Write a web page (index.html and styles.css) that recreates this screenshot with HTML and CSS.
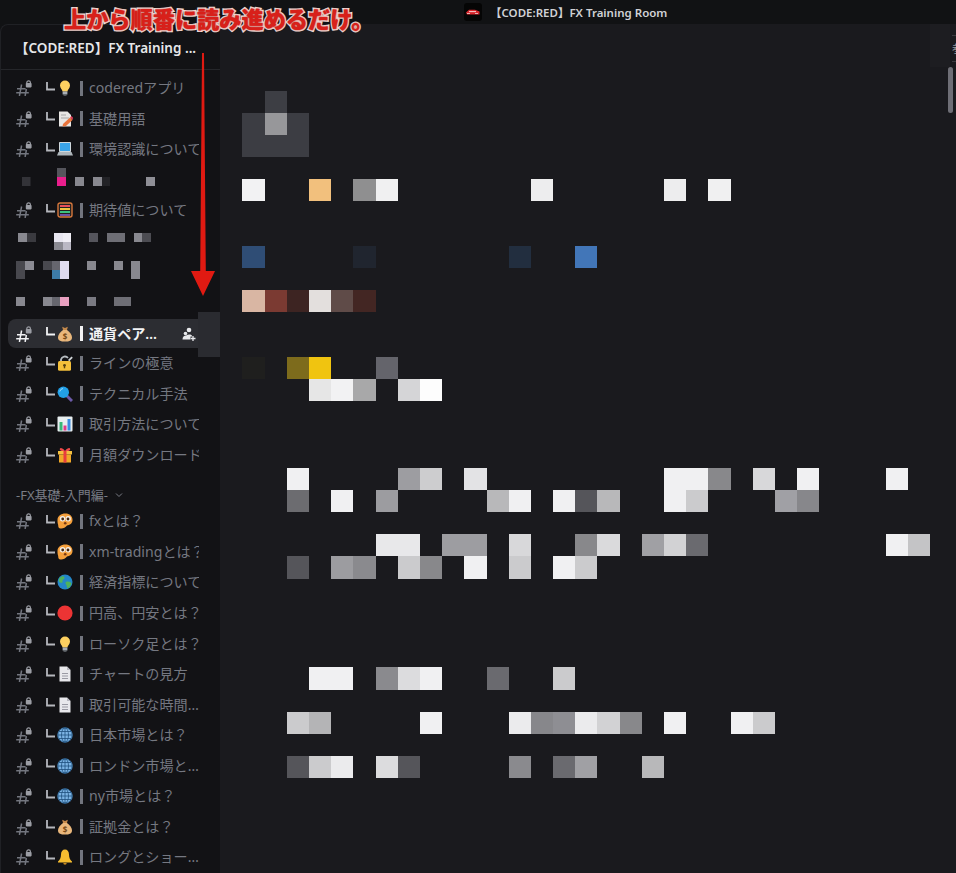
FILE: index.html
```html
<!DOCTYPE html>
<html lang="ja">
<head>
<meta charset="utf-8">
<title>【CODE:RED】FX Training Room</title>
<link rel="stylesheet" href="styles.css">
</head>
<body>
<svg class="defs" width="0" height="0" aria-hidden="true">
  <defs>
    <symbol id="hash" viewBox="0 0 16 16">
      <path d="M5.600 4.500 3.400 16M10.400 9 9.100 16M1 8.700H9.500M0.200 12.800H12.800" fill="none" stroke="currentColor" stroke-width="1.500"/>
      <rect x="10.800" y="0.800" width="3.600" height="4" rx="1.800" fill="none" stroke="#9b9da4" stroke-width="1.200"/>
      <rect x="9.800" y="3" width="5.800" height="4.400" rx="0.800" fill="#9b9da4"/>
    </symbol>
    <symbol id="elbow" viewBox="0 0 9 9">
      <path d="M1 0V7.500H9" fill="none" stroke="currentColor" stroke-width="1.800"/>
    </symbol>
    <symbol id="bulb" viewBox="0 0 16 16">
      <path d="M8 0.500A5 5 0 0 0 3 5.500C3 8 5.200 9.500 5.600 11.500H10.400C10.800 9.500 13 8 13 5.500A5 5 0 0 0 8 0.500Z" fill="#fdd060"/>
      <rect x="5.600" y="11.500" width="4.800" height="3" fill="#a8aeb5"/>
      <rect x="6.500" y="14.500" width="3" height="1.200" fill="#6d7278"/>
    </symbol>
    <symbol id="memo" viewBox="0 0 16 16">
      <path d="M2 0.500H10.500L14 4V15.500H2Z" fill="#e8e6e4"/>
      <path d="M4 4H9M4 7H12" stroke="#a8a8a8" stroke-width="1"/>
      <path d="M6 13 13 6.500 15.500 9 9 15 5.500 15.500Z" fill="#e8743c"/>
      <path d="M13 6.500 14.500 5 16 6.700 15.500 9Z" fill="#e0405a"/>
    </symbol>
    <symbol id="laptop" viewBox="0 0 16 16">
      <rect x="2" y="1" width="12" height="10" rx="0.800" fill="#cfd8dc"/>
      <rect x="3" y="2" width="10" height="8" fill="#3aa4e8"/>
      <path d="M1.500 11H14.500L16 14.500H0Z" fill="#aeb6bb"/>
    </symbol>
    <symbol id="abacus" viewBox="0 0 16 16">
      <rect x="1" y="1" width="14" height="14" rx="2" fill="#222" stroke="#d8783c" stroke-width="1.400"/>
      <path d="M3 4H13" stroke="#e8505a" stroke-width="2"/>
      <path d="M3 7H13" stroke="#f0c040" stroke-width="2"/>
      <path d="M3 10H13" stroke="#3cc080" stroke-width="2"/>
      <path d="M3 13H13" stroke="#8860d0" stroke-width="1.600"/>
    </symbol>
    <symbol id="bag" viewBox="0 0 16 16">
      <path d="M5.200 0.800 8 2 10.800 0.800 10 4H6Z" fill="#c58a4c"/>
      <path d="M6 4H10C13 6 15 9 15 11.500 15 14.500 12.500 15.600 8 15.600S1 14.500 1 11.500C1 9 3 6 6 4Z" fill="#e9b77c"/>
      <text class="bag-mark" x="8" y="13.500" text-anchor="middle">$</text>
    </symbol>
    <symbol id="lock" viewBox="0 0 16 16">
      <path d="M4 7V4.500A4 4 0 0 1 11 3" fill="none" stroke="#b7bcc1" stroke-width="1.800"/>
      <rect x="1" y="6" width="13" height="9.800" rx="1.500" fill="#f4bf3a"/>
      <circle cx="7.500" cy="10.300" r="1.400" fill="#5a4210"/>
      <rect x="6.800" y="10.300" width="1.400" height="3" fill="#5a4210"/>
      <path d="M11 5 14.500 1.500 15.800 2.800 12.300 6.300Z" fill="#d0d4d8"/>
    </symbol>
    <symbol id="lens" viewBox="0 0 16 16">
      <path d="M9.500 9.500 15 15" stroke="#6c5aa8" stroke-width="3"/>
      <circle cx="6.300" cy="6.300" r="5.700" fill="#22a0e8"/>
      <path d="M2.800 5.500A3.800 3.800 0 0 1 6 2.500" stroke="#9fdcfa" fill="none"/>
    </symbol>
    <symbol id="chart" viewBox="0 0 16 16">
      <rect x="0.500" y="0.500" width="15" height="15" rx="1" fill="#e8eef0"/>
      <rect x="2.500" y="6" width="3" height="8.500" fill="#38b878"/>
      <rect x="6.500" y="9.500" width="3" height="5" fill="#e03a8a"/>
      <rect x="10.500" y="3" width="3" height="11.500" fill="#3a8ce0"/>
    </symbol>
    <symbol id="gift" viewBox="0 0 16 16">
      <path d="M8 4C5 0 2 0.500 3 3 3.500 4 6 4 8 4 10 4 12.500 4 13 3 14 0.500 11 0 8 4Z" fill="#f04848"/>
      <rect x="1" y="4" width="14" height="3.500" fill="#f4c040"/>
      <rect x="2" y="7.500" width="12" height="8" fill="#f0a828"/>
      <rect x="6.500" y="4" width="3" height="11.500" fill="#ea3d3d"/>
    </symbol>
    <symbol id="face" viewBox="0 0 16 16">
      <path d="M8.500 0.500C12.500 0.500 15.500 3 15.500 7 15.500 10.500 12.500 12 10 12.500 8.500 14.500 6 15.800 3.500 15.500 1.800 15.300 1 14 1.200 12 0.500 10 0.500 8.500 0.500 7 0.500 3 4 0.500 8.500 0.500Z" fill="#f5a03c"/>
      <circle cx="5.500" cy="5.800" r="2.700" fill="#f5f0ea"/><circle cx="11.200" cy="5.800" r="2.700" fill="#f5f0ea"/>
      <circle cx="5.700" cy="6" r="1.400" fill="#4a2a10"/><circle cx="11" cy="6" r="1.400" fill="#4a2a10"/>
      <circle cx="8.200" cy="10.300" r="1.300" fill="#7a3a14"/>
    </symbol>
    <symbol id="earth" viewBox="0 0 16 16">
      <circle cx="8" cy="8" r="7.500" fill="#2487c8"/>
      <path d="M3 3.500C5 2 7 1.800 7.500 3.500 8 5 5 5.500 5.500 7.500 6 9.500 3 9 2 7.500 1.500 6 2 4.500 3 3.500ZM9 8C11 7 14 8 14.500 9.500 14 12 12 14 10.500 14.500 9.500 13 10 11.500 9 10.500 8.300 9.500 8.300 8.500 9 8Z" fill="#4fb35c"/>
    </symbol>
    <symbol id="red" viewBox="0 0 16 16">
      <circle cx="8" cy="8" r="7.600" fill="#ec3434"/>
    </symbol>
    <symbol id="page" viewBox="0 0 16 16">
      <path d="M2.500 0.500H10L13.500 4V15.500H2.500Z" fill="#e8e8ec"/>
      <path d="M10 0.500V4H13.500Z" fill="#b8b8c0"/>
      <path d="M5 7.500H11M5 10H11M5 12.500H11" stroke="#9a9aa4" stroke-width="1"/>
    </symbol>
    <symbol id="globe" viewBox="0 0 16 16">
      <circle cx="8" cy="8" r="7.600" fill="#7cb4e4"/>
      <g fill="none" stroke="#20507e" stroke-width="0.800">
        <circle cx="8" cy="8" r="7.200"/>
        <ellipse cx="8" cy="8" rx="3.500" ry="7.200"/>
        <path d="M8 0.800V15.200M0.800 8H15.200M1.800 4.500H14.200M1.800 11.500H14.200"/>
      </g>
    </symbol>
    <symbol id="bell" viewBox="0 0 16 16">
      <path d="M8 0.500C10.500 0.500 12 2.500 12 5.500 12 9 13.200 10.800 15 12.500V13.500H1V12.500C2.800 10.800 4 9 4 5.500 4 2.500 5.500 0.500 8 0.500Z" fill="#f6bd30"/>
      <path d="M6.300 14H9.700A1.700 1.700 0 0 1 6.300 14Z" fill="#c88a20"/>
    </symbol>
  </defs>
</svg>

<header class="titlebar">
  <svg class="app-logo" viewBox="0 0 18 18" aria-hidden="true">
    <rect width="18" height="18" rx="3" fill="#050505"/>
    <path d="M2 9.500 5 6.800H11L15.500 8.500 15.500 11.500H3Z" fill="#d9252c"/>
    <path d="M5 8.600H12" stroke="#f4d0d0" stroke-width="1"/>
    <path d="M3 10.500H6M11 10.500H14" stroke="#f4d0d0" stroke-width="0.800"/>
  </svg>
  <span class="app-title">【CODE:RED】FX Training Room</span>
</header>

<div class="app">
  <aside class="sidebar">
    <div class="guild-head"><span class="guild-name">【CODE:RED】FX Training ...</span></div>
    <nav class="channels">
      <a class="ch"><svg class="hash"><use href="#hash"/></svg><svg class="elbow"><use href="#elbow"/></svg><svg class="emoji"><use href="#bulb"/></svg><span class="bar"></span><span class="name">coderedアプリ</span></a>
      <a class="ch"><svg class="hash"><use href="#hash"/></svg><svg class="elbow"><use href="#elbow"/></svg><svg class="emoji"><use href="#memo"/></svg><span class="bar"></span><span class="name">基礎用語</span></a>
      <a class="ch"><svg class="hash"><use href="#hash"/></svg><svg class="elbow"><use href="#elbow"/></svg><svg class="emoji"><use href="#laptop"/></svg><span class="bar"></span><span class="name">環境認識について</span></a>
      <div class="ch-blur"><svg class="blur" viewBox="0 0 220 30" aria-hidden="true">
        <rect x="22" y="12" width="8.500" height="9" fill="#333338"/>
        <rect x="57" y="3" width="9" height="9" fill="#55555c"/><rect x="57" y="12" width="9" height="9" fill="#e91e8c"/>
        <rect x="75" y="12" width="9" height="9" fill="#88888f"/><rect x="93" y="12" width="9" height="9" fill="#88888f"/><rect x="102" y="12" width="8" height="9" fill="#222226"/>
        <rect x="146" y="12" width="9" height="9" fill="#8f8f96"/>
      </svg></div>
      <a class="ch"><svg class="hash"><use href="#hash"/></svg><svg class="elbow"><use href="#elbow"/></svg><svg class="emoji"><use href="#abacus"/></svg><span class="bar"></span><span class="name">期待値について</span></a>
      <div class="ch-blur"><svg class="blur" viewBox="0 0 220 30" aria-hidden="true">
        <rect x="18" y="7" width="9" height="9" fill="#88888f"/><rect x="27" y="7" width="9" height="9" fill="#3a3a3f"/>
        <rect x="54" y="7" width="9" height="9" fill="#e8e6f0"/><rect x="63" y="7" width="8" height="9" fill="#f0eef5"/>
        <rect x="54" y="16" width="9" height="8" fill="#8a8a92"/><rect x="63" y="16" width="8" height="8" fill="#bab8c4"/>
        <rect x="89" y="7" width="9" height="9" fill="#55555c"/><rect x="107" y="7" width="18" height="9" fill="#6e6e75"/>
        <rect x="134" y="7" width="8" height="9" fill="#88888f"/><rect x="142" y="7" width="9" height="9" fill="#4c4c52"/>
      </svg></div>
      <div class="ch-blur"><svg class="blur" viewBox="0 0 220 30" aria-hidden="true">
        <rect x="16" y="5" width="9" height="9" fill="#48484e"/><rect x="25" y="5" width="9" height="9" fill="#8a8a92"/>
        <rect x="16" y="14" width="9" height="9" fill="#48484e"/>
        <rect x="43" y="5" width="9" height="9" fill="#48484e"/><rect x="52" y="5" width="8" height="9" fill="#66666e"/><rect x="60" y="5" width="9" height="9" fill="#e0dcf0"/>
        <rect x="52" y="14" width="8" height="9" fill="#3d7ca8"/><rect x="60" y="14" width="9" height="9" fill="#dcd8ee"/>
        <rect x="87" y="5" width="9" height="9" fill="#88888f"/><rect x="114" y="5" width="9" height="9" fill="#88888f"/>
        <rect x="131" y="5" width="9" height="18" fill="#88888f"/>
      </svg></div>
      <div class="ch-blur"><svg class="blur" viewBox="0 0 220 30" aria-hidden="true">
        <rect x="16" y="10" width="9" height="9" fill="#88888f"/>
        <rect x="43" y="10" width="9" height="9" fill="#88888f"/><rect x="52" y="10" width="8" height="9" fill="#66666e"/><rect x="60" y="10" width="9" height="9" fill="#e8a0c0"/>
        <rect x="87" y="10" width="9" height="9" fill="#7a7a82"/><rect x="114" y="10" width="17" height="9" fill="#6e6e75"/>
      </svg></div>
      <a class="ch selected"><svg class="hash hash-on"><use href="#hash"/></svg><svg class="elbow"><use href="#elbow"/></svg><svg class="emoji"><use href="#bag"/></svg><span class="bar"></span><span class="name">通貨ペア…</span>
        <svg class="invite" viewBox="0 0 14 14" aria-hidden="true"><circle cx="7" cy="3" r="2.300" fill="currentColor"/><circle cx="3.500" cy="6.500" r="1.800" fill="currentColor"/><path d="M0.500 12.500C0.500 10 2 8.500 4 8.500 6 7 9 7 10 8.500V9.500H8.500V12.500Z" fill="currentColor"/><path d="M11 9V14M8.800 11.500H13.500" stroke="currentColor" stroke-width="1.300"/></svg>
      </a>
      <a class="ch"><svg class="hash"><use href="#hash"/></svg><svg class="elbow"><use href="#elbow"/></svg><svg class="emoji"><use href="#lock"/></svg><span class="bar"></span><span class="name">ラインの極意</span></a>
      <a class="ch"><svg class="hash"><use href="#hash"/></svg><svg class="elbow"><use href="#elbow"/></svg><svg class="emoji"><use href="#lens"/></svg><span class="bar"></span><span class="name">テクニカル手法</span></a>
      <a class="ch"><svg class="hash"><use href="#hash"/></svg><svg class="elbow"><use href="#elbow"/></svg><svg class="emoji"><use href="#chart"/></svg><span class="bar"></span><span class="name">取引方法について</span></a>
      <a class="ch"><svg class="hash"><use href="#hash"/></svg><svg class="elbow"><use href="#elbow"/></svg><svg class="emoji"><use href="#gift"/></svg><span class="bar"></span><span class="name">月額ダウンロード</span></a>
      <div class="category"><span>-FX基礎-入門編-</span><svg class="chev" viewBox="0 0 8 6" aria-hidden="true"><path d="M1 1.500 4 4.500 7 1.500" fill="none" stroke="currentColor" stroke-width="1"/></svg></div>
      <a class="ch"><svg class="hash"><use href="#hash"/></svg><svg class="elbow"><use href="#elbow"/></svg><svg class="emoji"><use href="#face"/></svg><span class="bar"></span><span class="name">fxとは？</span></a>
      <a class="ch"><svg class="hash"><use href="#hash"/></svg><svg class="elbow"><use href="#elbow"/></svg><svg class="emoji"><use href="#face"/></svg><span class="bar"></span><span class="name">xm-tradingとは？</span></a>
      <a class="ch"><svg class="hash"><use href="#hash"/></svg><svg class="elbow"><use href="#elbow"/></svg><svg class="emoji"><use href="#earth"/></svg><span class="bar"></span><span class="name">経済指標について</span></a>
      <a class="ch"><svg class="hash"><use href="#hash"/></svg><svg class="elbow"><use href="#elbow"/></svg><svg class="emoji"><use href="#red"/></svg><span class="bar"></span><span class="name">円高、円安とは？</span></a>
      <a class="ch"><svg class="hash"><use href="#hash"/></svg><svg class="elbow"><use href="#elbow"/></svg><svg class="emoji"><use href="#bulb"/></svg><span class="bar"></span><span class="name">ローソク足とは？</span></a>
      <a class="ch"><svg class="hash"><use href="#hash"/></svg><svg class="elbow"><use href="#elbow"/></svg><svg class="emoji"><use href="#page"/></svg><span class="bar"></span><span class="name">チャートの見方</span></a>
      <a class="ch"><svg class="hash"><use href="#hash"/></svg><svg class="elbow"><use href="#elbow"/></svg><svg class="emoji"><use href="#page"/></svg><span class="bar"></span><span class="name">取引可能な時間…</span></a>
      <a class="ch"><svg class="hash"><use href="#hash"/></svg><svg class="elbow"><use href="#elbow"/></svg><svg class="emoji"><use href="#globe"/></svg><span class="bar"></span><span class="name">日本市場とは？</span></a>
      <a class="ch"><svg class="hash"><use href="#hash"/></svg><svg class="elbow"><use href="#elbow"/></svg><svg class="emoji"><use href="#globe"/></svg><span class="bar"></span><span class="name">ロンドン市場と…</span></a>
      <a class="ch"><svg class="hash"><use href="#hash"/></svg><svg class="elbow"><use href="#elbow"/></svg><svg class="emoji"><use href="#globe"/></svg><span class="bar"></span><span class="name">ny市場とは？</span></a>
      <a class="ch"><svg class="hash"><use href="#hash"/></svg><svg class="elbow"><use href="#elbow"/></svg><svg class="emoji"><use href="#bag"/></svg><span class="bar"></span><span class="name">証拠金とは？</span></a>
      <a class="ch"><svg class="hash"><use href="#hash"/></svg><svg class="elbow"><use href="#elbow"/></svg><svg class="emoji"><use href="#bell"/></svg><span class="bar"></span><span class="name">ロングとショー…</span></a>
    </nav>
  </aside>

  <main class="content">
    <svg class="mosaic" viewBox="-0.02 -0.02 32 31" shape-rendering="crispEdges" aria-hidden="true">
      <rect x="1" y="0" width="1" height="1" fill="#3d3e44"/>
      <rect x="0" y="1" width="3" height="2" fill="#3c3d43"/><rect x="1" y="1" width="1" height="1" fill="#97979a"/>

      <rect x="0" y="4" width="1" height="1" fill="#f2f2f3"/><rect x="3" y="4" width="1" height="1" fill="#f2c07d"/><rect x="5" y="4" width="1" height="1" fill="#8f8f90"/><rect x="6" y="4" width="1" height="1" fill="#f0f0f1"/><rect x="13" y="4" width="1" height="1" fill="#ededee"/><rect x="19" y="4" width="1" height="1" fill="#ededee"/><rect x="21" y="4" width="1" height="1" fill="#f0f0f1"/>

      <rect x="0" y="7" width="1" height="1" fill="#2f4d75"/><rect x="5" y="7" width="1" height="1" fill="#20252f"/><rect x="12" y="7" width="1" height="1" fill="#222e3f"/><rect x="15" y="7" width="1" height="1" fill="#4276b8"/>

      <rect x="0" y="9" width="1" height="1" fill="#d9b6a3"/><rect x="1" y="9" width="1" height="1" fill="#7b3a32"/><rect x="2" y="9" width="1" height="1" fill="#3d2422"/><rect x="3" y="9" width="1" height="1" fill="#e3dfdd"/><rect x="4" y="9" width="1" height="1" fill="#5f4b48"/><rect x="5" y="9" width="1" height="1" fill="#432623"/>

      <rect x="0" y="12" width="1" height="1" fill="#1f1f1e"/><rect x="2" y="12" width="1" height="1" fill="#7d6b1c"/><rect x="3" y="12" width="1" height="1" fill="#f0c410"/><rect x="6" y="12" width="1" height="1" fill="#64646b"/>
      <rect x="3" y="13" width="1" height="1" fill="#e6e6e6"/><rect x="4" y="13" width="1" height="1" fill="#f2f2f3"/><rect x="5" y="13" width="1" height="1" fill="#a8a8a9"/><rect x="7" y="13" width="1" height="1" fill="#d5d5d7"/><rect x="8" y="13" width="1" height="1" fill="#fdfdfd"/>

      <rect x="2" y="17" width="1" height="1" fill="#f0f0f2"/><rect x="7" y="17" width="1" height="1" fill="#9d9da1"/><rect x="8" y="17" width="1" height="1" fill="#cdcdcf"/><rect x="10" y="17" width="1" height="1" fill="#e3e3e5"/><rect x="19" y="17" width="2" height="1" fill="#f0f0f2"/><rect x="21" y="17" width="1" height="1" fill="#88888b"/><rect x="23" y="17" width="1" height="1" fill="#d8d8da"/><rect x="25" y="17" width="1" height="1" fill="#f0f0f2"/><rect x="29" y="17" width="1" height="1" fill="#f0f0f2"/>
      <rect x="2" y="18" width="1" height="1" fill="#6c6c70"/><rect x="4" y="18" width="1" height="1" fill="#f0f0f2"/><rect x="6" y="18" width="1" height="1" fill="#9c9ca0"/><rect x="11" y="18" width="1" height="1" fill="#b8b8ba"/><rect x="12" y="18" width="1" height="1" fill="#f0f0f2"/><rect x="14" y="18" width="1" height="1" fill="#f0f0f2"/><rect x="15" y="18" width="1" height="1" fill="#55555a"/><rect x="16" y="18" width="1" height="1" fill="#b8b8ba"/><rect x="19" y="18" width="1" height="1" fill="#f0f0f2"/><rect x="20" y="18" width="1" height="1" fill="#cbcbcd"/><rect x="24" y="18" width="1" height="1" fill="#a0a0a5"/><rect x="25" y="18" width="1" height="1" fill="#87878b"/>

      <rect x="6" y="20" width="2" height="1" fill="#e8e8ea"/><rect x="9" y="20" width="2" height="1" fill="#9d9da1"/><rect x="12" y="20" width="1" height="1" fill="#d8d8da"/><rect x="15" y="20" width="1" height="1" fill="#88888b"/><rect x="16" y="20" width="1" height="1" fill="#dadadc"/><rect x="18" y="20" width="1" height="1" fill="#a0a0a4"/><rect x="19" y="20" width="1" height="1" fill="#d2d2d4"/><rect x="20" y="20" width="1" height="1" fill="#6a6a6f"/><rect x="29" y="20" width="1" height="1" fill="#f0f0f2"/><rect x="30" y="20" width="1" height="1" fill="#c4c4c6"/>
      <rect x="2" y="21" width="1" height="1" fill="#55555a"/><rect x="4" y="21" width="1" height="1" fill="#9c9ca0"/><rect x="5" y="21" width="1" height="1" fill="#8a8a8e"/><rect x="7" y="21" width="1" height="1" fill="#cbcbcd"/><rect x="8" y="21" width="1" height="1" fill="#88888b"/><rect x="10" y="21" width="1" height="1" fill="#f0f0f2"/><rect x="12" y="21" width="1" height="1" fill="#cbcbcd"/><rect x="14" y="21" width="1" height="1" fill="#f0f0f2"/><rect x="15" y="21" width="1" height="1" fill="#cbcbcd"/>

      <rect x="3" y="26" width="2" height="1" fill="#f0f0f2"/><rect x="6" y="26" width="1" height="1" fill="#8a8a8e"/><rect x="7" y="26" width="1" height="1" fill="#dcdcde"/><rect x="8" y="26" width="1" height="1" fill="#f0f0f2"/><rect x="11" y="26" width="1" height="1" fill="#6a6a6f"/><rect x="14" y="26" width="1" height="1" fill="#cbcbcd"/>

      <rect x="2" y="28" width="1" height="1" fill="#cbcbcd"/><rect x="3" y="28" width="1" height="1" fill="#b4b4b6"/><rect x="8" y="28" width="1" height="1" fill="#f0f0f2"/><rect x="12" y="28" width="1" height="1" fill="#ebebed"/><rect x="13" y="28" width="1" height="1" fill="#87878b"/><rect x="14" y="28" width="1" height="1" fill="#8e8e93"/><rect x="15" y="28" width="1" height="1" fill="#ebebed"/><rect x="16" y="28" width="1" height="1" fill="#d2d2d4"/><rect x="17" y="28" width="1" height="1" fill="#88888b"/><rect x="19" y="28" width="1" height="1" fill="#f0f0f2"/><rect x="22" y="28" width="1" height="1" fill="#f0f0f2"/><rect x="23" y="28" width="1" height="1" fill="#cbcbcd"/>

      <rect x="2" y="30" width="1" height="1" fill="#55555a"/><rect x="3" y="30" width="1" height="1" fill="#cbcbcd"/><rect x="4" y="30" width="1" height="1" fill="#ebebed"/><rect x="6" y="30" width="1" height="1" fill="#dcdcde"/><rect x="7" y="30" width="1" height="1" fill="#55555a"/><rect x="12" y="30" width="1" height="1" fill="#8a8a8e"/><rect x="14" y="30" width="1" height="1" fill="#6a6a6f"/><rect x="15" y="30" width="1" height="1" fill="#a0a0a4"/><rect x="18" y="30" width="1" height="1" fill="#b8b8ba"/>
    </svg>
    <div class="scroll-thumb"></div>
    <div class="edge-tab"></div>
    <div class="edge-strip"><span class="edge-glyph">参</span></div>
  </main>
</div>

<div class="hover-patch"></div>
<div class="annotation-text">上から順番に読み進めるだけ。</div>
<svg class="annotation-arrow" viewBox="0 0 26 246" aria-hidden="true">
  <path d="M12 0H14L15.800 218H25L13 243 1 218H10.200Z" fill="#e01a12"/>
</svg>
</body>
</html>
```
FILE: styles.css
```css
* { box-sizing: border-box; }
html, body { margin: 0; height: 100%; }
body {
  position: relative;
  width: 956px;
  height: 873px;
  overflow: hidden;
  background: #111214;
  font-family: "Noto Sans", "Noto Sans CJK JP", sans-serif;
  color: #80848e;
}
.defs { position: absolute; }

.titlebar {
  height: 24px;
  display: flex;
  align-items: center;
  padding-left: 464px;
  gap: 8px;
}
.app-logo { width: 18px; height: 18px; flex: none; }
.app-title {
  font-size: 11.500px;
  font-weight: 600;
  color: #d0d1d5;
  white-space: nowrap;
}

.app { display: flex; height: 849px; }

.sidebar {
  width: 220px;
  flex: none;
  background: #121215;
  border-top: 1px solid #202125;
  border-left: 1px solid #202125;
  border-top-left-radius: 8px;
  overflow: hidden;
}
.guild-head {
  height: 45px;
  display: flex;
  align-items: center;
  padding-left: 14px;
  border-bottom: 1px solid #25262a;
}
.guild-name {
  font-size: 13.500px;
  font-weight: 600;
  color: #e6e7ea;
  white-space: nowrap;
}
.channels { padding-top: 3px; margin-left: -1px; }

.ch {
  height: 30.550px;
  display: flex;
  align-items: center;
  padding-left: 17px;
  white-space: nowrap;
}
.hash { width: 16px; height: 16px; flex: none; margin-left: -1px; color: #73767f; }
.elbow { width: 9px; height: 9px; flex: none; margin: -4px 0 0 14px; color: #b5b7bd; }
.emoji { width: 16px; height: 16px; flex: none; margin-left: 2px; }
.bar { width: 3px; height: 15px; flex: none; margin: 0 6px 0 7px; background: #72757e; }
.name {
  font-size: 14.100px;
  max-width: 110px;
  overflow: hidden;
  margin-top: -2px;
  color: #757881;
}
.ch.selected {
  margin: 2px 8px -0.450px;
  padding-left: 9px;
  height: 29px;
  border-radius: 8px 0 0 8px;
  background: #2c2d32;
  position: relative;
}
.selected .hash, .selected .elbow { color: #f2f3f5; }
.selected .bar { background: #f2f3f5; }
.selected .name { color: #f2f3f5; font-weight: 600; }
.invite { width: 14px; height: 14px; margin-left: 25px; color: #e8e9ec; flex: none; }

.ch-blur { height: 30.550px; }
.blur { display: block; width: 220px; height: 30px; }

.category {
  height: 36px;
  display: flex;
  align-items: flex-end;
  gap: 7px;
  padding: 0 0 2px 16px;
  font-size: 13px;
  color: #7a7d86;
}
.chev { width: 8px; height: 6px; margin-bottom: 6px; }

.content {
  flex: 1;
  position: relative;
  background: #1a1a1e;
  padding: 66px 0 0 22px;
}
.mosaic { display: block; width: 710px; height: 688px; }

.scroll-thumb {
  position: absolute;
  left: 728px;
  top: 43px;
  width: 5px;
  height: 46px;
  background: #6e6e76;
  border-radius: 3px;
}
.edge-tab {
  position: absolute;
  left: 710px;
  top: 0;
  width: 20px;
  height: 43px;
  background: #1d1d21;
}
.edge-strip {
  position: absolute;
  left: 732px;
  top: 11px;
  width: 4px;
  height: 27px;
  border-top: 1px solid #3a3a3f;
  border-bottom: 1px solid #3a3a3f;
  overflow: hidden;
  line-height: 25px;
}
.edge-glyph {
  display: block;
  font-size: 11px;
  color: #9a9aa0;
}

.hover-patch {
  position: absolute;
  left: 198px;
  top: 312px;
  width: 22px;
  height: 45px;
  background: #2a2b30;
}
.annotation-text {
  position: absolute;
  left: 64px;
  top: 4px;
  font-size: 22.200px;
  font-weight: 900;
  line-height: 32px;
  white-space: nowrap;
  color: #d8201a;
  -webkit-text-stroke: 3px #f4e4e0;
  paint-order: stroke fill;
  text-shadow: 0 0 2px #b02018;
}
.annotation-arrow {
  position: absolute;
  left: 190px;
  top: 53px;
  width: 26px;
  height: 246px;
}
.bag-mark { font-size: 8px; fill: #7a4a18; font-family: "Noto Sans", sans-serif; font-weight: 700; }
```
